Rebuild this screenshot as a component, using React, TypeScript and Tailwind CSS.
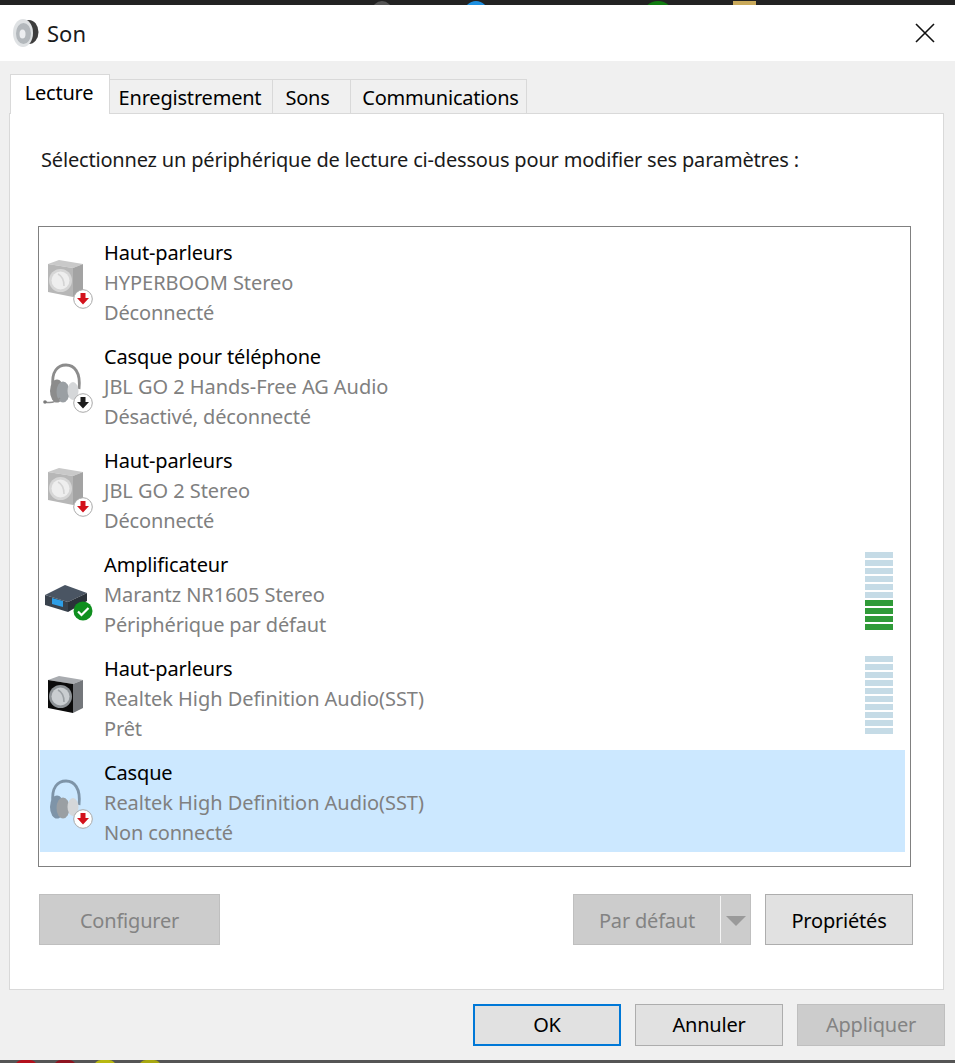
import React from 'react';

type Device = {
  name: string;
  model: string;
  status: string;
  icon: 'speaker' | 'phones' | 'amp' | 'speakerOn' | 'headset';
  badge?: 'red' | 'black' | 'green';
  meter?: number;
  selected?: boolean;
};

const devices: Device[] = [
  { name: 'Haut-parleurs', model: 'HYPERBOOM Stereo', status: 'Déconnecté', icon: 'speaker', badge: 'red' },
  { name: 'Casque pour téléphone', model: 'JBL GO 2 Hands-Free AG Audio', status: 'Désactivé, déconnecté', icon: 'phones', badge: 'black' },
  { name: 'Haut-parleurs', model: 'JBL GO 2 Stereo', status: 'Déconnecté', icon: 'speaker', badge: 'red' },
  { name: 'Amplificateur', model: 'Marantz NR1605 Stereo', status: 'Périphérique par défaut', icon: 'amp', badge: 'green', meter: 4 },
  { name: 'Haut-parleurs', model: 'Realtek High Definition Audio(SST)', status: 'Prêt', icon: 'speakerOn', meter: 0 },
  { name: 'Casque', model: 'Realtek High Definition Audio(SST)', status: 'Non connecté', icon: 'headset', badge: 'red', selected: true },
];

function Badge({ kind }: { kind: 'red' | 'black' | 'green' }) {
  if (kind === 'green') {
    return (
      <g>
        <circle cx="43" cy="44" r="9.5" fill="#0f8f1f" />
        <path d="M38 44.5l3.5 3.5 7-7" fill="none" stroke="#fff" strokeWidth="2.2" />
      </g>
    );
  }
  const color = kind === 'red' ? '#d3121c' : '#1c1c1c';
  return (
    <g>
      <circle cx="43" cy="44" r="9.3" fill="#fff" stroke="#a9a9a9" strokeWidth="1" />
      <path d="M40.5 38h5v5h3.5l-6 6.5-6-6.5h3.5z" fill={color} />
    </g>
  );
}

function Speaker({ dark }: { dark?: boolean }) {
  return (
    <g>
      <path d="M8 9l11-4 24 4-10 4z" fill={dark ? '#a9acb0' : '#c9c9c9'} />
      <path d="M33 13l10-4v28l-10 5z" fill={dark ? '#74777b' : '#a3a3a3'} />
      <path d="M8 9l25 4v29L8 37z" fill={dark ? '#0b0b0b' : '#b7b7b7'} />
      <circle cx="20.5" cy="25.5" r="11.5" fill={dark ? '#8d9296' : '#d6d6d6'} />
      <circle cx="20.5" cy="25.5" r="9" fill={dark ? '#c9cdd0' : '#eeeeee'} />
      <path d="M18 19c4 2 6 6 6 12" fill="none" stroke={dark ? '#9ba0a4' : '#d4d4d4'} strokeWidth="1.6" />
    </g>
  );
}

function Phones({ mic, tint }: { mic?: boolean; tint: string }) {
  return (
    <g>
      <path d="M13 28C11 12 18 6 26 6s15 7 13 24" fill="none" stroke={tint} strokeWidth="2.8" />
      <ellipse cx="17" cy="32" rx="7" ry="11.5" fill={tint} />
      <ellipse cx="23" cy="33" rx="6.5" ry="10.5" fill="#9a9fa3" />
      <ellipse cx="33" cy="32" rx="5.5" ry="9" fill="#d5d7d9" />
      {mic && <path d="M5 43c6 1.5 11 0 15-4" fill="none" stroke="#8e8e8e" strokeWidth="1.4" />}
      {mic && <circle cx="5" cy="43" r="1.8" fill="#7a7a7a" />}
    </g>
  );
}

function Amp() {
  return (
    <g>
      <path d="M5 28l20-10 22 8-19 9z" fill="#4a5563" />
      <path d="M5 28l23 7v10L5 38z" fill="#39424d" />
      <path d="M28 35l19-9v8L28 45z" fill="#2b323a" />
      <path d="M12 31l11 3v6l-11-3z" fill="#2e9ee6" />
    </g>
  );
}

function DeviceIcon({ device }: { device: Device }) {
  return (
    <svg width="56" height="56" viewBox="0 0 56 56" className="shrink-0 mt-[25px]">
      {device.icon === 'speaker' && <Speaker />}
      {device.icon === 'speakerOn' && <Speaker dark />}
      {device.icon === 'phones' && <Phones mic tint="#8c8c8c" />}
      {device.icon === 'headset' && <Phones tint="#7e94a8" />}
      {device.icon === 'amp' && <Amp />}
      {device.badge && <Badge kind={device.badge} />}
    </svg>
  );
}

function Meter({ level }: { level: number }) {
  const bars = Array.from({ length: 10 }, (_, i) => i);
  return (
    <div className="ml-auto mr-[12px] mt-[10px] flex w-[28px] flex-col gap-[2px]">
      {bars.map((i) => (
        <div key={i} className={i >= 10 - level ? 'h-[6px] bg-[#2f9a38]' : 'h-[6px] bg-[#c5dbe6]'} />
      ))}
    </div>
  );
}

function Row({ device }: { device: Device }) {
  return (
    <div className={`mb-[2px] flex h-[102px] ${device.selected ? 'bg-[#cce8ff]' : ''}`}>
      <DeviceIcon device={device} />
      <div className="ml-[8px] pt-[8px] text-[20px] leading-[30px] tracking-[-0.15px] whitespace-nowrap">
        <div className="text-black">{device.name}</div>
        <div className="tracking-[-0.05px] text-[#808080]">{device.model}</div>
        <div className="text-[#808080]">{device.status}</div>
      </div>
      {device.meter !== undefined && <Meter level={device.meter} />}
    </div>
  );
}

function Button({ label, width, disabled, primary }: { label: string; width: string; disabled?: boolean; primary?: boolean }) {
  const look = disabled
    ? 'border border-[#bfbfbf] bg-[#cccccc] text-[#838383]'
    : primary
      ? 'border-2 border-[#0078d7] bg-[#e1e1e1] text-black'
      : 'border border-[#adadad] bg-[#e1e1e1] text-black';
  return <div className={`flex items-center justify-center text-[20px] tracking-[-0.2px] ${width} ${look}`}>{label}</div>;
}

export default function App() {
  return (
    <div className="flex h-[1063px] w-[955px] flex-col overflow-hidden bg-white font-['Noto_Sans',sans-serif]">
      {/* what is left of the desktop behind the dialog */}
      <div className="flex h-[5px] shrink-0 items-start overflow-hidden bg-[#222222] pl-[372px] pt-px">
        <div className="h-[20px] w-[20px] rounded-full bg-[#555555]" />
        <div className="ml-[72px] h-[24px] w-[24px] rounded-full bg-[#1d8fe0]" />
        <div className="ml-[154px] h-[32px] w-[32px] rounded-full bg-[#107c10]" />
        <div className="ml-[59px] h-[4px] w-[23px] bg-[#c9a95a]" />
      </div>

      <div className="flex h-[56px] shrink-0 items-center pl-[12px] pr-[20px]">
        <svg width="28" height="30" viewBox="0 0 28 30" className="shrink-0">
          <ellipse cx="17" cy="14" rx="9.5" ry="12" fill="#3d3d3d" />
          <ellipse cx="11" cy="15" rx="10" ry="14" fill="#dfe2e4" />
          <ellipse cx="11.5" cy="15.5" rx="7.5" ry="10.5" fill="#b3b8bc" />
          <ellipse cx="10.5" cy="16" rx="3" ry="4.5" fill="#eceef0" />
        </svg>
        <span className="ml-[7px] text-[22px] text-[#1a1a1a]">Son</span>
        <svg width="20" height="20" viewBox="0 0 20 20" className="ml-auto" fill="none" stroke="#111" strokeWidth="1.6">
          <path d="M1 1l18 18M19 1L1 19" />
        </svg>
      </div>

      <div className="flex flex-1 flex-col bg-[#f0f0f0] pl-[9px] pt-[13px]">
        <div className="relative z-10 -mb-px flex h-[40px] items-end pl-px text-[20px] tracking-[-0.2px] text-black">
          <div className="flex h-[40px] w-[100px] justify-center border-x border-t border-[#d9d9d9] bg-white pr-[2px] pt-[3px]">Lecture</div>
          <div className="flex h-[35px] w-[163px] items-center justify-center border-r border-t border-b border-[#d9d9d9] bg-[#f0f0f0] pr-[2px] pt-[2px]">Enregistrement</div>
          <div className="flex h-[35px] w-[78px] items-center justify-center border-r border-t border-b border-[#d9d9d9] bg-[#f0f0f0] pr-[8px] pt-[2px]">Sons</div>
          <div className="flex h-[35px] w-[176px] items-center justify-center border-r border-t border-b border-[#d9d9d9] bg-[#f0f0f0] pl-[4px] pt-[2px]">Communications</div>
        </div>

        <div className="flex h-[877px] w-[935px] flex-col border border-[#d9d9d9] bg-white pl-[28px]">
          <p className="mt-[30px] h-[82px] text-[20px] leading-[32px] tracking-[-0.18px] text-[#1a1a1a]">
            <span className="ml-[3px]">Sélectionnez un périphérique de lecture ci-dessous pour modifier ses paramètres :</span>
          </p>
          <div className="h-[641px] w-[873px] border border-[#808080] pl-px pr-[5px] pt-[3px]">
            {devices.map((d, i) => (
              <Row key={i} device={d} />
            ))}
          </div>
          <div className="mt-[27px] flex h-[51px] pl-px">
            <Button label="Configurer" width="w-[181px] pt-[2px]" disabled />
            <div className="ml-auto mr-[30px] flex">
              <div className="flex w-[178px] border border-[#bfbfbf] bg-[#cccccc] pt-[2px] text-[20px] tracking-[-0.2px] text-[#838383]">
                <div className="flex w-[146px] items-center justify-center">Par défaut</div>
                <div className="-mt-px mb-px w-px bg-[#f4f4f4]" />
                <div className="flex flex-1 items-center justify-center">
                  <svg width="20" height="10" viewBox="0 0 20 10">
                    <path d="M0 0h20L10 10z" fill="#9a9a9a" />
                  </svg>
                </div>
              </div>
              <div className="ml-[14px] flex">
                <Button label="Propriétés" width="w-[148px] pt-[2px]" />
              </div>
            </div>
          </div>
        </div>

        <div className="mt-[14px] flex h-[42px] gap-[14px] pl-[464px]">
          <Button label="OK" width="w-[148px]" primary />
          <Button label="Annuler" width="w-[148px]" />
          <Button label="Appliquer" width="w-[148px]" disabled />
        </div>
      </div>

      <div className="flex h-[3px] shrink-0 items-start overflow-hidden bg-[#555555] pl-[15px]">
        <div className="h-[14px] w-[22px] rounded-full bg-[#b3101c]" />
        <div className="ml-[17px] h-[14px] w-[22px] rounded-full bg-[#8e1420]" />
        <div className="ml-[18px] h-[14px] w-[22px] rounded-full bg-[#b8b810]" />
        <div className="ml-[23px] h-[14px] w-[22px] rounded-full bg-[#a8a810]" />
      </div>
    </div>
  );
}
